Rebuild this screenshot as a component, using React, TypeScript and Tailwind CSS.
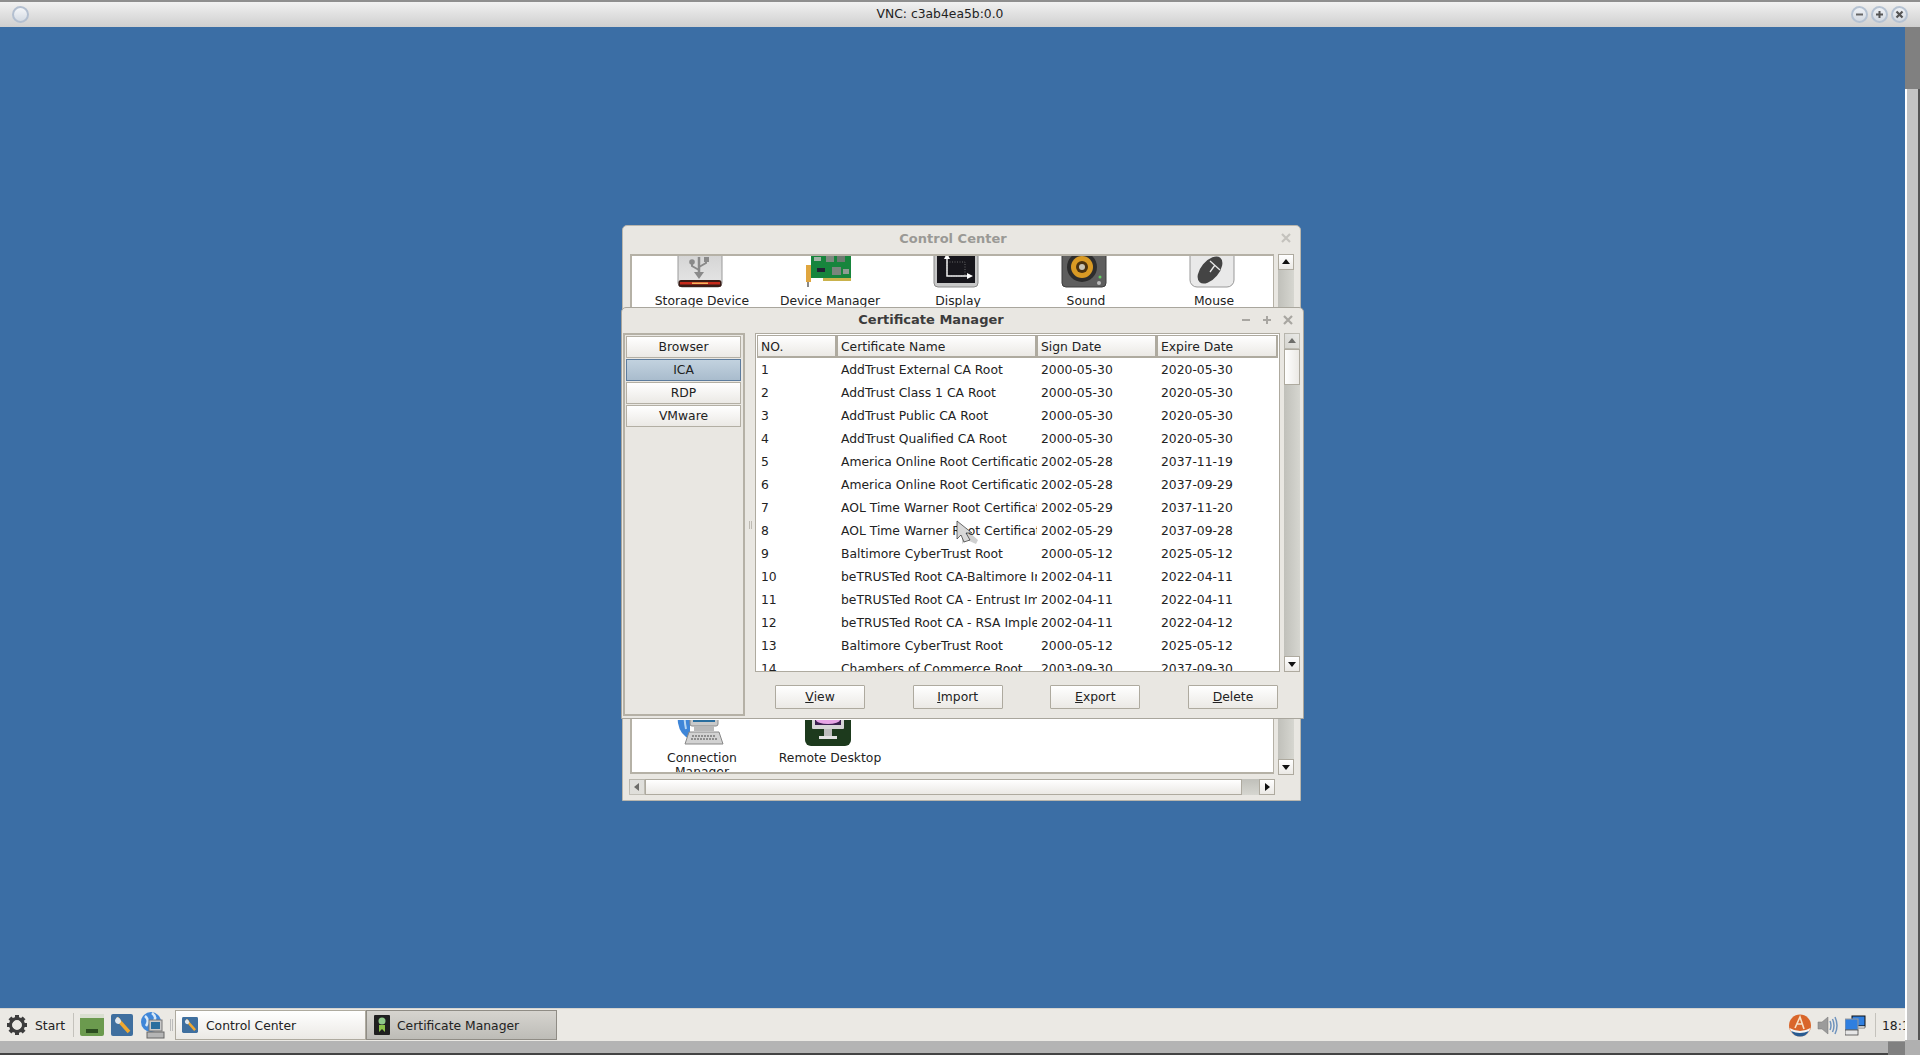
import React from "react";

const font = { fontFamily: '"DejaVu Sans", sans-serif' };

const rows: [string, string, string, string][] = [
  ["1", "AddTrust External CA Root", "2000-05-30", "2020-05-30"],
  ["2", "AddTrust Class 1 CA Root", "2000-05-30", "2020-05-30"],
  ["3", "AddTrust Public CA Root", "2000-05-30", "2020-05-30"],
  ["4", "AddTrust Qualified CA Root", "2000-05-30", "2020-05-30"],
  ["5", "America Online Root Certification Authority 1", "2002-05-28", "2037-11-19"],
  ["6", "America Online Root Certification Authority 2", "2002-05-28", "2037-09-29"],
  ["7", "AOL Time Warner Root Certification Authority 1", "2002-05-29", "2037-11-20"],
  ["8", "AOL Time Warner Root Certification Authority 2", "2002-05-29", "2037-09-28"],
  ["9", "Baltimore CyberTrust Root", "2000-05-12", "2025-05-12"],
  ["10", "beTRUSTed Root CA-Baltimore Implementation", "2002-04-11", "2022-04-11"],
  ["11", "beTRUSTed Root CA - Entrust Implementation", "2002-04-11", "2022-04-11"],
  ["12", "beTRUSTed Root CA - RSA Implementation", "2002-04-11", "2022-04-12"],
  ["13", "Baltimore CyberTrust Root", "2000-05-12", "2025-05-12"],
  ["14", "Chambers of Commerce Root", "2003-09-30", "2037-09-30"],
];

const Arrow = ({ d }: { d: "up" | "down" | "left" | "right" }) => {
  const p = { up: "M4 1 L8 6 L0 6 Z", down: "M0 2 L8 2 L4 7 Z", left: "M6 0 L6 8 L1 4 Z", right: "M2 0 L2 8 L7 4 Z" }[d];
  return (
    <svg width="8" height="8" viewBox="0 0 8 8">
      <path d={p} fill="#111" />
    </svg>
  );
};

const ScrollBtn = ({ d, dim }: { d: "up" | "down" | "left" | "right"; dim?: boolean }) => (
  <div className={`w-4 h-4 shrink-0 flex items-center justify-center border border-[#aeaa9f] bg-gradient-to-b from-white to-[#ebe9e5] ${dim ? "opacity-50" : ""}`}>
    <Arrow d={d} />
  </div>
);

const Column = ({ label, w }: { label: string; w: string }) => (
  <div className={`${w} h-[23px] pt-[2px] flex items-center pl-[3px] border border-[#aeaa9f] border-b-2 border-r-2 bg-gradient-to-b from-white to-[#ebe9e5] text-[12.35px] text-[#222]`}>
    {label}
  </div>
);

const SideBtn = ({ label, active }: { label: string; active?: boolean }) => (
  <div
    className={`h-[22px] mb-px flex items-center justify-center text-[12.35px] text-[#222] border ${
      active ? "border-[#5d7c9d] bg-gradient-to-b from-[#c2d2df] to-[#a9bccd]" : "border-[#b3afa4] bg-gradient-to-b from-white to-[#ebe9e5]"
    }`}
  >
    {label}
  </div>
);

const ActBtn = ({ first, rest }: { first: string; rest: string }) => (
  <div className="w-[90px] h-[24px] flex items-center justify-center text-[12.35px] text-[#222] border border-[#aeaa9f] rounded-[1px] bg-gradient-to-b from-white to-[#ebe9e5]">
    <span className="underline">{first}</span>
    {rest}
  </div>
);

const IconUsb = () => (
  <svg width="46" height="36" viewBox="0 0 46 36">
    <defs>
      <linearGradient id="usbg" x1="0" y1="0" x2="0" y2="1">
        <stop offset="0" stopColor="#cfcfcf" />
        <stop offset="1" stopColor="#e6e6e6" />
      </linearGradient>
    </defs>
    <rect x="1" y="-8" width="44" height="43" rx="4" fill="url(#usbg)" stroke="#9a9a9a" />
    <rect x="1.5" y="28" width="43" height="7" rx="2.5" fill="#3a1a14" />
    <rect x="3" y="30" width="40" height="2.5" fill="#c62a1a" />
    <rect x="15" y="30.5" width="16" height="1.5" fill="#f5b35a" />
    <path d="M22 5 V23" stroke="#8a8a8a" strokeWidth="2.5" />
    <path d="M22 27 L17 20 H27 Z" fill="#8a8a8a" />
    <path d="M22 18 L15 14 V11 M22 15 L29 11 V9" stroke="#8a8a8a" strokeWidth="2" fill="none" />
    <circle cx="15" cy="10" r="2.8" fill="#8a8a8a" />
    <rect x="27" y="5" width="5" height="5" fill="#8a8a8a" />
  </svg>
);

const IconCard = () => (
  <svg width="46" height="36" viewBox="0 0 46 36">
    <rect x="6" y="0" width="40" height="26" fill="#17853d" />
    <rect x="21" y="3" width="8" height="7" fill="#7d8a80" />
    <rect x="32" y="3" width="8" height="7" fill="#6b7a70" />
    <rect x="27" y="15" width="9" height="8" fill="#7a857d" />
    <rect x="38" y="17" width="6" height="5" fill="#8f9c93" />
    <rect x="9" y="5" width="7" height="4" fill="#9fb3a5" />
    <rect x="12" y="16" width="8" height="4" fill="#223" />
    <rect x="5" y="0" width="5" height="4" fill="#3a7fc2" />
    <rect x="1" y="13" width="5" height="17" fill="#e0a63f" />
    <rect x="2" y="30" width="2" height="5" fill="#888" />
    <rect x="18" y="26" width="28" height="3" fill="#c9b24c" />
  </svg>
);

const IconDisplay = () => (
  <svg width="46" height="36" viewBox="0 0 46 36">
    <rect x="1" y="-6" width="44" height="41" rx="4" fill="#c8c8c8" stroke="#8b8b8b" />
    <rect x="4" y="-3" width="38" height="34" fill="#17161c" />
    <rect x="14" y="10" width="18" height="14" fill="none" stroke="#666" strokeDasharray="1 1.5" />
    <path d="M14 4 V24 H36" stroke="#eee" strokeWidth="1.5" fill="none" />
    <path d="M14 1 L11 7 H17 Z M40 24 L34 21 V27 Z" fill="#fff" />
  </svg>
);

const IconSound = () => (
  <svg width="46" height="36" viewBox="0 0 46 36">
    <rect x="1" y="-10" width="44" height="45" rx="4" fill="#5e5e5e" stroke="#3d3d3d" />
    <circle cx="21" cy="15" r="15" fill="#2d2d2d" />
    <circle cx="21" cy="15" r="11" fill="#d99a24" />
    <circle cx="21" cy="15" r="6" fill="#4a3210" />
    <circle cx="21" cy="15" r="3" fill="#c9c4b5" />
    <circle cx="39" cy="25" r="1.5" fill="#5fcf5f" />
    <circle cx="38" cy="31" r="2" fill="#bbb" />
  </svg>
);

const IconMouse = () => (
  <svg width="46" height="36" viewBox="0 0 46 36">
    <rect x="1" y="-8" width="44" height="43" rx="7" fill="#e9e9e9" stroke="#999" />
    <ellipse cx="21" cy="18" rx="16" ry="9" transform="rotate(-50 21 18)" fill="#444" />
    <path d="M21 9 L31 18 M26 13 L21 20" stroke="#e9e9e9" strokeWidth="1.3" />
  </svg>
);

const IconConnection = () => (
  <svg width="48" height="46" viewBox="0 0 48 46">
    <path d="M14 0 Q0 6 2 22 Q4 34 14 38 Z" fill="#3f86d8" />
    <path d="M14 0 Q6 10 10 28" stroke="#b6d6f2" strokeWidth="2" fill="none" />
    <rect x="14" y="0" width="28" height="25" rx="2" fill="#c9c9c9" stroke="#8a8a8a" />
    <rect x="17" y="1" width="22" height="20" fill="#2a6e9e" />
    <rect x="18" y="25" width="20" height="5" fill="#b9b9b9" />
    <path d="M13 31 H43 L47 43 H9 Z" fill="#d2d2d2" stroke="#888" />
    <path d="M16 35 H40 M15 38 H42" stroke="#777" strokeWidth="1.5" strokeDasharray="2 1" />
  </svg>
);

const IconRemote = () => (
  <svg width="48" height="36" viewBox="0 0 48 36">
    <rect x="1" y="-10" width="46" height="45" rx="6" fill="#1d3a1d" />
    <rect x="8" y="-8" width="32" height="26" rx="1" fill="#d6d6d6" />
    <rect x="11" y="-6" width="26" height="20" fill="#3a1f4e" />
    <ellipse cx="24" cy="9" rx="12" ry="4" fill="#e7a5e5" />
    <rect x="20" y="18" width="8" height="7" fill="#bdbdbd" />
    <rect x="15" y="25" width="18" height="3" fill="#e4e4e4" />
  </svg>
);

const Gear = () => (
  <svg width="22" height="22" viewBox="0 0 22 22">
    <g fill="#3d3d3d">
      {[0, 45, 90, 135, 180, 225, 270, 315].map((a) => (
        <rect key={a} x="9" y="1" width="4" height="5" transform={`rotate(${a} 11 11)`} />
      ))}
    </g>
    <circle cx="11" cy="11" r="6.5" fill="none" stroke="#3d3d3d" strokeWidth="3" />
  </svg>
);

const Launcher1 = () => (
  <svg width="24" height="24" viewBox="0 0 24 24">
    <rect x="0" y="1" width="24" height="22" rx="2" fill="#6b9a4e" />
    <rect x="0" y="1" width="24" height="4" fill="#d9dfd0" />
    <rect x="6" y="16" width="12" height="4" fill="#2c4d20" />
  </svg>
);

const WrenchBox = ({ s }: { s: number }) => (
  <svg width={s} height={s} viewBox="0 0 22 22">
    <rect width="22" height="22" rx="2" fill="#3f6f9f" />
    <path d="M6 4 L10 9 L18 18" stroke="#f0a830" strokeWidth="3.5" fill="none" />
    <path d="M4 6 Q4 10 8 10 L10 8 Q10 4 6 3 Z" fill="#dfe6ee" />
  </svg>
);

const Globe = () => (
  <svg width="25" height="27" viewBox="0 0 25 27">
    <circle cx="11" cy="10" r="10" fill="#3f86d8" />
    <path d="M5 4 Q10 8 6 14 M12 1 Q17 5 14 9" stroke="#d7e8f7" strokeWidth="2.5" fill="none" />
    <rect x="9" y="8" width="13" height="11" fill="#c9c9c9" stroke="#777" />
    <rect x="11" y="10" width="9" height="7" fill="#2a6e9e" />
    <rect x="7" y="20" width="17" height="6" fill="#b5b5b5" stroke="#666" />
  </svg>
);

const CertIcon = () => (
  <svg width="16" height="20" viewBox="0 0 16 20">
    <rect width="16" height="20" rx="1" fill="#1f1f1f" />
    <circle cx="8" cy="6" r="3.5" fill="#8fc98a" />
    <path d="M5 10 H11 V17 L8 14 L5 17 Z" fill="#8bc34a" />
  </svg>
);

const TrayOrange = () => (
  <svg width="22" height="23" viewBox="0 0 22 23">
    <circle cx="11" cy="11.5" r="11" fill="#d9662a" />
    <path d="M0.5 14 Q11 20 21.5 14 Q19 22.5 11 22.5 Q3 22.5 0.5 14 Z" fill="#f4f4f4" />
    <path d="M2 17 Q11 21 20 17 Q17 22.5 11 22.5 Q5 22.5 2 17 Z" fill="#285a90" />
    <path d="M6 14 L11 3 L15 15 M8 10 H13" stroke="#f6e2c7" strokeWidth="1.6" fill="none" />
  </svg>
);

const Speaker = () => (
  <svg width="22" height="21" viewBox="0 0 22 21">
    <path d="M1 7 H5 L11 2 V19 L5 14 H1 Z" fill="#9b9b9b" stroke="#777" strokeWidth="0.5" />
    <path d="M13 6 Q15 10.5 13 15 M15.5 4 Q18.5 10.5 15.5 17 M18 2 Q22 10.5 18 19" stroke="#6f93bd" strokeWidth="1.5" fill="none" />
  </svg>
);

const Network = () => (
  <svg width="21" height="21" viewBox="0 0 21 21">
    <rect x="7" y="1" width="13" height="10" fill="#2f7fe0" stroke="#111" />
    <path d="M8 11 H20 V13 H8 Z" fill="#fff" stroke="#111" strokeWidth="0.5" />
    <rect x="0" y="4" width="13" height="11" fill="#2f7fe0" stroke="#999" />
    <rect x="0" y="15" width="13" height="5" fill="#e6e6e6" stroke="#333" strokeWidth="0.7" />
  </svg>
);

const Cursor = () => (
  <svg width="26" height="30" viewBox="0 0 26 30" className="absolute left-[956px] top-[520px]">
    <path d="M6 6 L6 24 L11 20 L20 24 L22 20 Z" fill="#777" opacity="0.35" />
    <path d="M1 1 L1 19 L5 15 L8 22 L14 20 L10 13 L16 13 Z" fill="#d8d8d8" stroke="#111" strokeWidth="0.6" />
  </svg>
);

const TitleBtn = ({ children }: { children: React.ReactNode }) => (
  <div className="w-[17px] h-[17px] rounded-full border-2 border-[#b5c2d2] bg-gradient-to-b from-[#eef1f5] to-[#d4dae2] flex items-center justify-center text-[#555]">
    {children}
  </div>
);

const Launcher = ({ icon, label, extra, box, gap }: { icon: React.ReactNode; label: string; extra?: string; box: string; gap: string }) => (
  <div className="w-[128px] shrink-0 flex flex-col items-center">
    <div className={`${box} shrink-0 mr-[4px] flex items-end justify-center overflow-hidden`}>{icon}</div>
    <div className={`text-[12.35px] leading-[17px] ${gap} text-[#222] text-center`}>{label}</div>
    {extra && <div className="text-[12.35px] leading-[15px] -mt-[2px] text-[#222] text-center">{extra}</div>}
  </div>
);

export default function App() {
  return (
    <div className="relative w-[1920px] h-[1055px] overflow-hidden flex flex-col bg-[#3b6ea5]" style={font}>
      {/* VNC title bar */}
      <div className="h-[27px] shrink-0 border-t-2 border-[#8e8e8e] bg-gradient-to-b from-[#f1f1f1] to-[#cfcfcf] flex items-center justify-between pl-[12px] pr-[12px]">
        <div className="w-[17px] h-[17px] rounded-full border-2 border-[#b3bfd0] bg-gradient-to-b from-[#f4f6f9] to-[#d5dbe3]" />
        <div className="text-[12.35px] text-[#222]">VNC: c3ab4ea5b:0.0</div>
        <div className="flex gap-[3px]">
          <TitleBtn><svg width="9" height="9" viewBox="0 0 9 9"><path d="M1 4.5 H8" stroke="#666" strokeWidth="2" /></svg></TitleBtn>
          <TitleBtn><svg width="9" height="9" viewBox="0 0 9 9"><path d="M1 4.5 H8 M4.5 1 V8" stroke="#555" strokeWidth="2" /></svg></TitleBtn>
          <TitleBtn><svg width="9" height="9" viewBox="0 0 9 9"><path d="M1.5 1.5 L7.5 7.5 M7.5 1.5 L1.5 7.5" stroke="#555" strokeWidth="2.2" /></svg></TitleBtn>
        </div>
      </div>

      <div className="flex-1 flex min-h-0">
        <div className="w-[1905px] flex flex-col">
          <div className="flex-1" />
          {/* Taskbar */}
          <div className="h-[33px] shrink-0 bg-[#ebe9e4] border-t border-[#d6d4cf] flex items-center text-[12.35px] text-[#222]">
            <div className="ml-[6px]"><Gear /></div>
            <div className="ml-[7px] w-[30px] pt-[2px]">Start</div>
            <div className="ml-[8px] w-px h-[24px] bg-[#c4c2bc]" />
            <div className="ml-[6px]"><Launcher1 /></div>
            <div className="ml-[7px]"><WrenchBox s={22} /></div>
            <div className="ml-[7px]"><Globe /></div>
            <div className="ml-[5px] w-[3px] h-[12px] border-x border-[#bbb]" />
            <div className="ml-[2px] w-[191px] h-[30px] flex items-center pl-[6px] gap-[8px] border border-[#aeaa9f] bg-gradient-to-b from-white to-[#ebe9e5]">
              <WrenchBox s={16} />
              <span className="pt-[2px]">Control Center</span>
            </div>
            <div className="w-[191px] h-[30px] flex items-center pl-[7px] gap-[7px] border border-[#8f8c85] bg-gradient-to-b from-[#d6d4cf] to-[#bdbcb7]">
              <CertIcon />
              <span className="pt-[3px]">Certificate Manager</span>
            </div>
            <div className="flex-1" />
            <TrayOrange />
            <div className="ml-[6px]"><Speaker /></div>
            <div className="ml-[6px]"><Network /></div>
            <div className="ml-[9px] w-px h-[24px] bg-[#c4c2bc]" />
            <div className="ml-[6px] w-[23px] pt-[2px] overflow-hidden whitespace-nowrap text-[#222]">18:15</div>
          </div>
          {/* Bottom viewer scrollbar */}
          <div className="h-[14px] shrink-0 flex">
            <div className="flex-1 flex flex-col">
              <div className="flex-1 bg-[#b4b4b4]" />
              <div className="h-[2px] bg-[#444]" />
            </div>
            <div className="w-[17px] bg-[#808080] border-t border-[#999]" />
          </div>
        </div>
        {/* Right viewer scrollbar */}
        <div className="w-[15px] flex flex-col">
          <div className="h-[62px] bg-[#808080]" />
          <div className="flex-1 bg-[#c4c4c4] border-l-2 border-white border-r-2 border-r-[#555]" />
          <div className="h-[15px] bg-[#b0b0b0]" />
        </div>
      </div>

      {/* Control Center window */}
      <div className="absolute left-[622px] top-[225px] w-[679px] h-[576px] rounded-t-[5px] border border-[#b9b6ad] bg-[#e9e7e2] flex flex-col text-[#222]">
        <div className="h-[28px] shrink-0 relative flex items-center justify-center font-bold text-[13px] text-[#9a9995] pr-[17px] pb-[2px]">
          Control Center
          <svg width="10" height="10" viewBox="0 0 10 10" className="absolute right-[9px] top-[7px]">
            <path d="M1 1 L9 9 M9 1 L1 9" stroke="#c4c2bd" strokeWidth="2.2" />
          </svg>
        </div>
        <div className="flex-1 flex min-h-0 pl-[7px] pr-[6px]">
          <div className="w-[644px] mb-px border-2 border-[#b5b1a6] border-r-[1px] bg-white flex flex-col justify-between overflow-hidden">
            <div className="flex pl-[6px]">
              <Launcher box="h-[32px]" gap="mt-[5px]" icon={<IconUsb />} label="Storage Device" />
              <Launcher box="h-[32px]" gap="mt-[5px]" icon={<IconCard />} label="Device Manager" />
              <Launcher box="h-[32px]" gap="mt-[5px]" icon={<IconDisplay />} label="Display" />
              <Launcher box="h-[32px]" gap="mt-[5px]" icon={<IconSound />} label="Sound" />
              <Launcher box="h-[32px]" gap="mt-[5px]" icon={<IconMouse />} label="Mouse" />
            </div>
            <div className="flex pl-[6px] h-[52px] overflow-hidden">
              <Launcher box="h-[27px]" gap="mt-[3px]" icon={<IconConnection />} label="Connection" extra="Manager" />
              <Launcher box="h-[27px]" gap="mt-[3px]" icon={<IconRemote />} label="Remote Desktop" />
            </div>
          </div>
          <div className="ml-[4px] w-[16px] flex flex-col bg-gradient-to-r from-[#c0c0ba] to-[#d6d6d0]">
            <ScrollBtn d="up" />
            <div className="flex-1" />
            <ScrollBtn d="down" />
          </div>
        </div>
        <div className="h-[25px] shrink-0 pl-[6px] pt-[4px]">
          <div className="w-[646px] h-[16px] flex bg-gradient-to-b from-[#c0c0ba] to-[#d6d6d0]">
            <ScrollBtn d="left" dim />
            <div className="w-[597px] border border-[#aeaa9f] bg-gradient-to-b from-white to-[#ebe9e5]" />
            <div className="flex-1" />
            <ScrollBtn d="right" />
          </div>
        </div>
      </div>

      {/* Certificate Manager window */}
      <div className="absolute left-[621px] top-[307px] w-[683px] h-[412px] rounded-t-[5px] border border-[#a9a69d] bg-[#e9e7e2] flex flex-col text-[#222]">
        <div className="h-[25px] shrink-0 relative flex items-center justify-center font-bold text-[13px] text-[#3c3c3c] pr-[63px] pb-px">
          Certificate Manager
          <div className="absolute right-[10px] top-[7px] flex gap-[11px]">
            <svg width="10" height="10" viewBox="0 0 10 10"><path d="M1 5 H9" stroke="#a8a6a1" strokeWidth="2" /></svg>
            <svg width="10" height="10" viewBox="0 0 10 10"><path d="M1 5 H9 M5 1 V9" stroke="#a8a6a1" strokeWidth="2" /></svg>
            <svg width="10" height="10" viewBox="0 0 10 10"><path d="M1 1 L9 9 M9 1 L1 9" stroke="#a8a6a1" strokeWidth="2.2" /></svg>
          </div>
        </div>
        <div className="flex-1 flex min-h-0 pb-[2px] pl-[1px]">
          {/* Side list */}
          <div className="w-[122px] shrink-0 border-2 border-[#b5b1a6] pl-[1px] pr-[2px] pt-[1px]">
            <SideBtn label="Browser" />
            <SideBtn label="ICA" active />
            <SideBtn label="RDP" />
            <SideBtn label="VMware" />
          </div>
          {/* Splitter */}
          <div className="w-[10px] shrink-0 flex items-center justify-center">
            <div className="w-[3px] h-[8px] border-x border-[#bdbab2]" />
          </div>
          <div className="flex-1 flex flex-col min-w-0 pr-[3px]">
            <div className="h-[339px] shrink-0 flex">
              <div className="w-[525px] border border-[#aeaa9f] bg-white pl-[1px] pt-[1px] overflow-hidden">
                <div className="flex">
                  <Column label="NO." w="w-[80px]" />
                  <Column label="Certificate Name" w="w-[200px]" />
                  <Column label="Sign Date" w="w-[120px]" />
                  <Column label="Expire Date" w="w-[121px]" />
                </div>
                {rows.map((r) => (
                  <div key={r[0]} className="flex h-[23px] pt-[2px] items-center text-[12.35px] text-[#222]">
                    <div className="w-[80px] pl-[4px]">{r[0]}</div>
                    <div className="w-[200px] pl-[4px] overflow-hidden whitespace-nowrap">{r[1]}</div>
                    <div className="w-[120px] pl-[4px]">{r[2]}</div>
                    <div className="w-[121px] pl-[4px]">{r[3]}</div>
                  </div>
                ))}
              </div>
              <div className="ml-[4px] w-[16px] flex flex-col bg-gradient-to-r from-[#c0c0ba] to-[#d6d6d0]">
                <ScrollBtn d="up" dim />
                <div className="h-[36px] border border-[#aeaa9f] bg-gradient-to-r from-white to-[#ebe9e5]" />
                <div className="flex-1" />
                <ScrollBtn d="down" />
              </div>
            </div>
            <div className="flex-1 flex justify-between items-start pt-[13px] pl-[20px] pr-[22px]">
              <ActBtn first="V" rest="iew" />
              <ActBtn first="I" rest="mport" />
              <ActBtn first="E" rest="xport" />
              <ActBtn first="D" rest="elete" />
            </div>
          </div>
        </div>
      </div>

      <Cursor />
    </div>
  );
}
